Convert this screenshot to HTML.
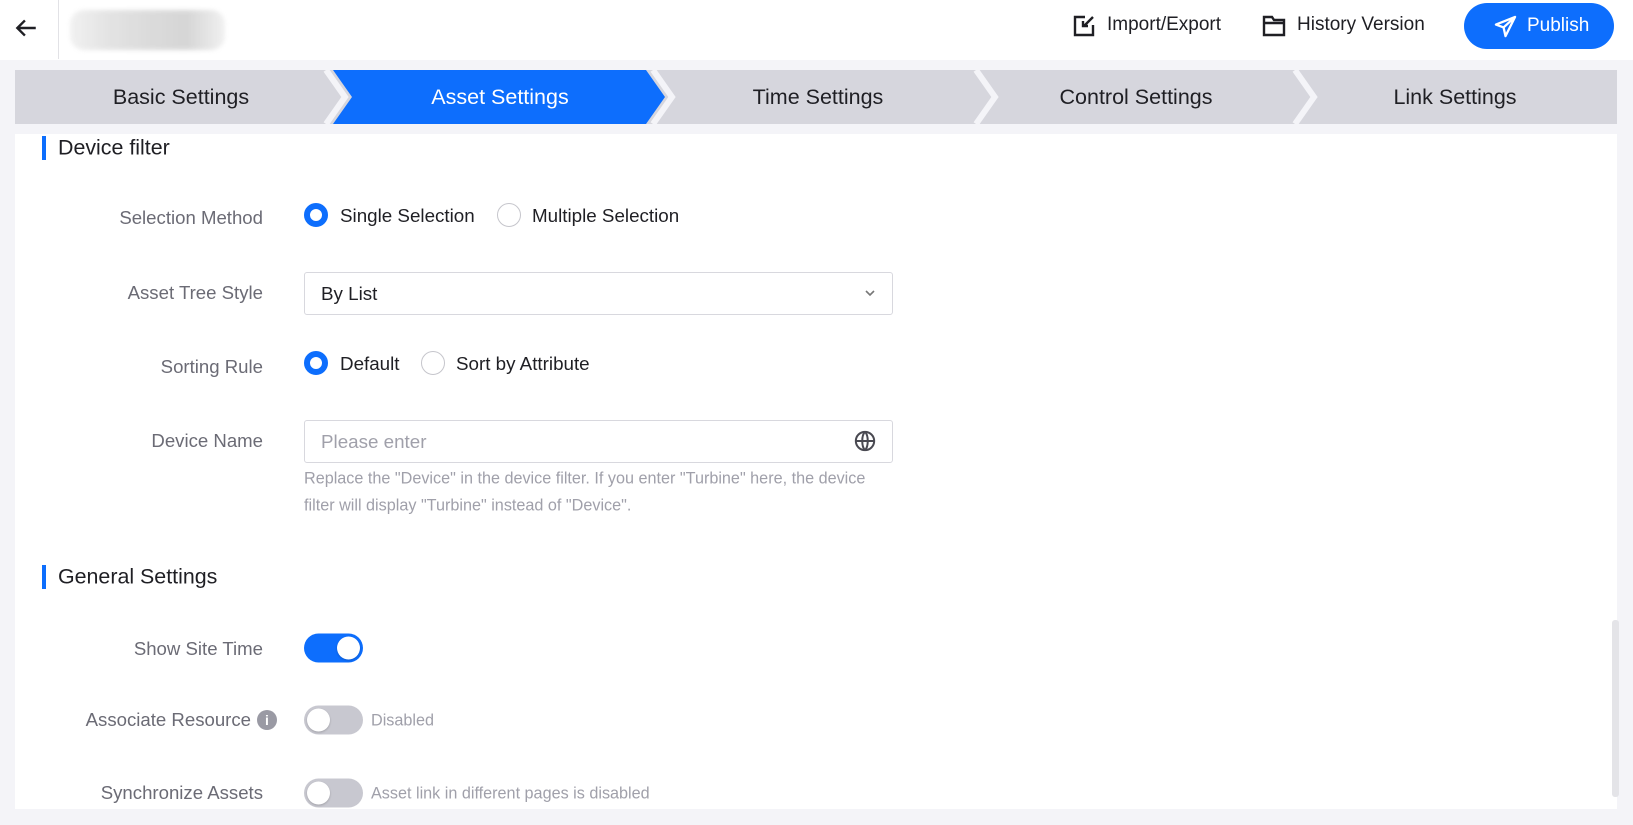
<!DOCTYPE html>
<html><head><meta charset="utf-8"><style>
*{box-sizing:border-box;margin:0;padding:0}
body{width:1633px;height:825px;background:#f4f4f8;font-family:"Liberation Sans",Arial,sans-serif;position:relative;overflow:hidden;color:#1f1f24}
.abs{position:absolute}
.hdr{left:0;top:0;width:1633px;height:60px;background:#fff}
.tabs{left:15px;top:70px;width:1602px;height:54px}
.lbl{position:absolute;right:1370px;font-size:18.6px;color:#6b6b75;white-space:nowrap;transform:translateY(-50%)}
.radio{position:absolute;width:24px;height:24px;border-radius:50%;border:1px solid #c6c6cc;background:#fff;transform:translateY(-50%)}
.radio.on{border:6px solid #0d6efd}
.rt{position:absolute;font-size:18.8px;color:#1f1f24;transform:translateY(-50%);white-space:nowrap}
.sw{position:absolute;left:304px;width:59px;height:29px;border-radius:15px;background:#c8c8d0;transform:translateY(-50%)}
.sw::after{content:"";position:absolute;left:3px;top:3px;width:23px;height:23px;border-radius:50%;background:#fff;box-shadow:0 1px 2px rgba(0,0,0,.2)}
.sw.on{background:#0d6efd}.sw.on::after{left:33px}
.hint{position:absolute;left:371px;font-size:16.2px;color:#a0a0aa;transform:translateY(-50%);white-space:nowrap}
.h2{position:absolute;left:58px;font-size:21.4px;transform:translateY(-50%)}
.bar{position:absolute;left:42px;width:4px;height:24px;background:#0d6efd;transform:translateY(-50%)}
</style></head><body>
<div class="abs hdr"></div>
<svg class="abs" style="left:13px;top:15px" width="26" height="26" viewBox="0 0 24 24"><path d="M21 12H4M11 5l-7 7 7 7" fill="none" stroke="#1f1f24" stroke-width="2.2"/></svg>
<div class="abs" style="left:58px;top:0;width:1px;height:59px;background:#e2e2e6"></div>
<div class="abs" style="left:70px;top:10px;width:155px;height:40px;border-radius:14px;background:linear-gradient(90deg,#eee,#ddd,#d3d3d3,#ccc,#eee);opacity:.8;filter:blur(2px)"></div>
<svg class="abs" style="left:1072px;top:14px" width="24" height="24" viewBox="0 0 24 24"><path d="M13 3H3v18h18V11" fill="none" stroke="#1f1f24" stroke-width="2.4"/><path d="M21 3l-9 9M11 7v5h5" fill="none" stroke="#1f1f24" stroke-width="2.4"/></svg>
<div class="abs" style="left:1107px;top:14px;font-size:19px">Import/Export</div>
<svg class="abs" style="left:1262px;top:14px" width="24" height="24" viewBox="0 0 24 24"><path d="M2 3h8l2 3h10v15H2zM2 9h20" fill="none" stroke="#1f1f24" stroke-width="2.4"/></svg>
<div class="abs" style="left:1297px;top:14px;font-size:19px">History Version</div>
<div class="abs" style="left:1464px;top:3px;width:150px;height:46px;border-radius:23px;background:#0d6efd"></div>
<svg class="abs" style="left:1494px;top:15px" width="23" height="23" viewBox="0 0 24 24"><path d="M22 2L2 10l8 3 2 9zM10 13l12-11" fill="none" stroke="#fff" stroke-width="2.4" stroke-linejoin="round"/></svg>
<div class="abs" style="left:1527px;top:15px;font-size:19px;color:#fff">Publish</div>
<svg class="abs tabs" viewBox="0 0 1602 54" width="1602" height="54">
<polygon points="0,0 1602,0 1602,54 0,54" fill="#d6d6dd"/>
<polygon points="318,0 631,0 650,27 631,54 318,54 337,27" fill="#0d6efd"/>
<polyline points="311,0 330,27 311,54" fill="none" stroke="#f4f4f8" stroke-width="6"/>
<polyline points="638,0 657,27 638,54" fill="none" stroke="#f4f4f8" stroke-width="6"/>
<polyline points="961,0 980,27 961,54" fill="none" stroke="#f4f4f8" stroke-width="6"/>
<polyline points="1280,0 1299,27 1280,54" fill="none" stroke="#f4f4f8" stroke-width="6"/>
<g font-family="Liberation Sans,sans-serif" font-size="21.5" text-anchor="middle">
<text x="166" y="34" fill="#1f1f24">Basic Settings</text>
<text x="485" y="34" fill="#fff">Asset Settings</text>
<text x="803" y="34" fill="#1f1f24">Time Settings</text>
<text x="1121" y="34" fill="#1f1f24">Control Settings</text>
<text x="1440" y="34" fill="#1f1f24">Link Settings</text></g></svg>
<div class="abs" style="left:15px;top:134px;width:1602px;height:675px;background:#fff"></div>
<div class="abs" style="left:1612px;top:620px;width:7px;height:177px;background:#e4e4e8;border-radius:3px"></div>
<div class="bar" style="top:148px"></div><div class="h2" style="top:148px">Device filter</div>
<div class="lbl" style="top:218px">Selection Method</div>
<div class="radio on" style="left:304px;top:215px"></div><div class="rt" style="left:340px;top:216px">Single Selection</div>
<div class="radio" style="left:497px;top:215px"></div><div class="rt" style="left:532px;top:216px">Multiple Selection</div>
<div class="lbl" style="top:293px">Asset Tree Style</div>
<div class="abs" style="left:304px;top:272px;width:589px;height:43px;border:1px solid #d8d8de;border-radius:3px"></div>
<div class="rt" style="left:321px;top:294px">By List</div>
<svg class="abs" style="left:864px;top:287px" width="12" height="12" viewBox="0 0 12 12"><path d="M2 4l4 4 4-4" fill="none" stroke="#777" stroke-width="1.6"/></svg>
<div class="lbl" style="top:367px">Sorting Rule</div>
<div class="radio on" style="left:304px;top:363px"></div><div class="rt" style="left:340px;top:364px">Default</div>
<div class="radio" style="left:421px;top:363px"></div><div class="rt" style="left:456px;top:364px">Sort by Attribute</div>
<div class="lbl" style="top:441px">Device Name</div>
<div class="abs" style="left:304px;top:420px;width:589px;height:43px;border:1px solid #d8d8de;border-radius:3px"></div>
<div class="rt" style="left:321px;top:442px;color:#a0a0aa">Please enter</div>
<svg class="abs" style="left:854px;top:430px" width="22" height="22" viewBox="0 0 24 24" fill="none" stroke="#4a4a52" stroke-width="2.2"><circle cx="12" cy="12" r="10"/><path d="M2 12h20M12 2c-4 4-4 16 0 20M12 2c4 4 4 16 0 20"/></svg>
<div class="hint" style="left:304px;top:479px">Replace the "Device" in the device filter. If you enter "Turbine" here, the device</div>
<div class="hint" style="left:304px;top:506px">filter will display "Turbine" instead of "Device".</div>
<div class="bar" style="top:577px"></div><div class="h2" style="top:577px">General Settings</div>
<div class="lbl" style="top:649px">Show Site Time</div>
<div class="sw on" style="top:648px"></div>
<div class="lbl" style="top:720px;right:1382px">Associate Resource</div>
<div class="abs" style="left:257px;top:710px;width:20px;height:20px;border-radius:50%;background:#9a9aa4;color:#fff;font-size:14px;font-weight:bold;text-align:center;line-height:20px">i</div>
<div class="sw" style="top:720px"></div><div class="hint" style="top:721px">Disabled</div>
<div class="lbl" style="top:793px">Synchronize Assets</div>
<div class="sw" style="top:793px"></div><div class="hint" style="top:794px">Asset link in different pages is disabled</div>
</body></html>
